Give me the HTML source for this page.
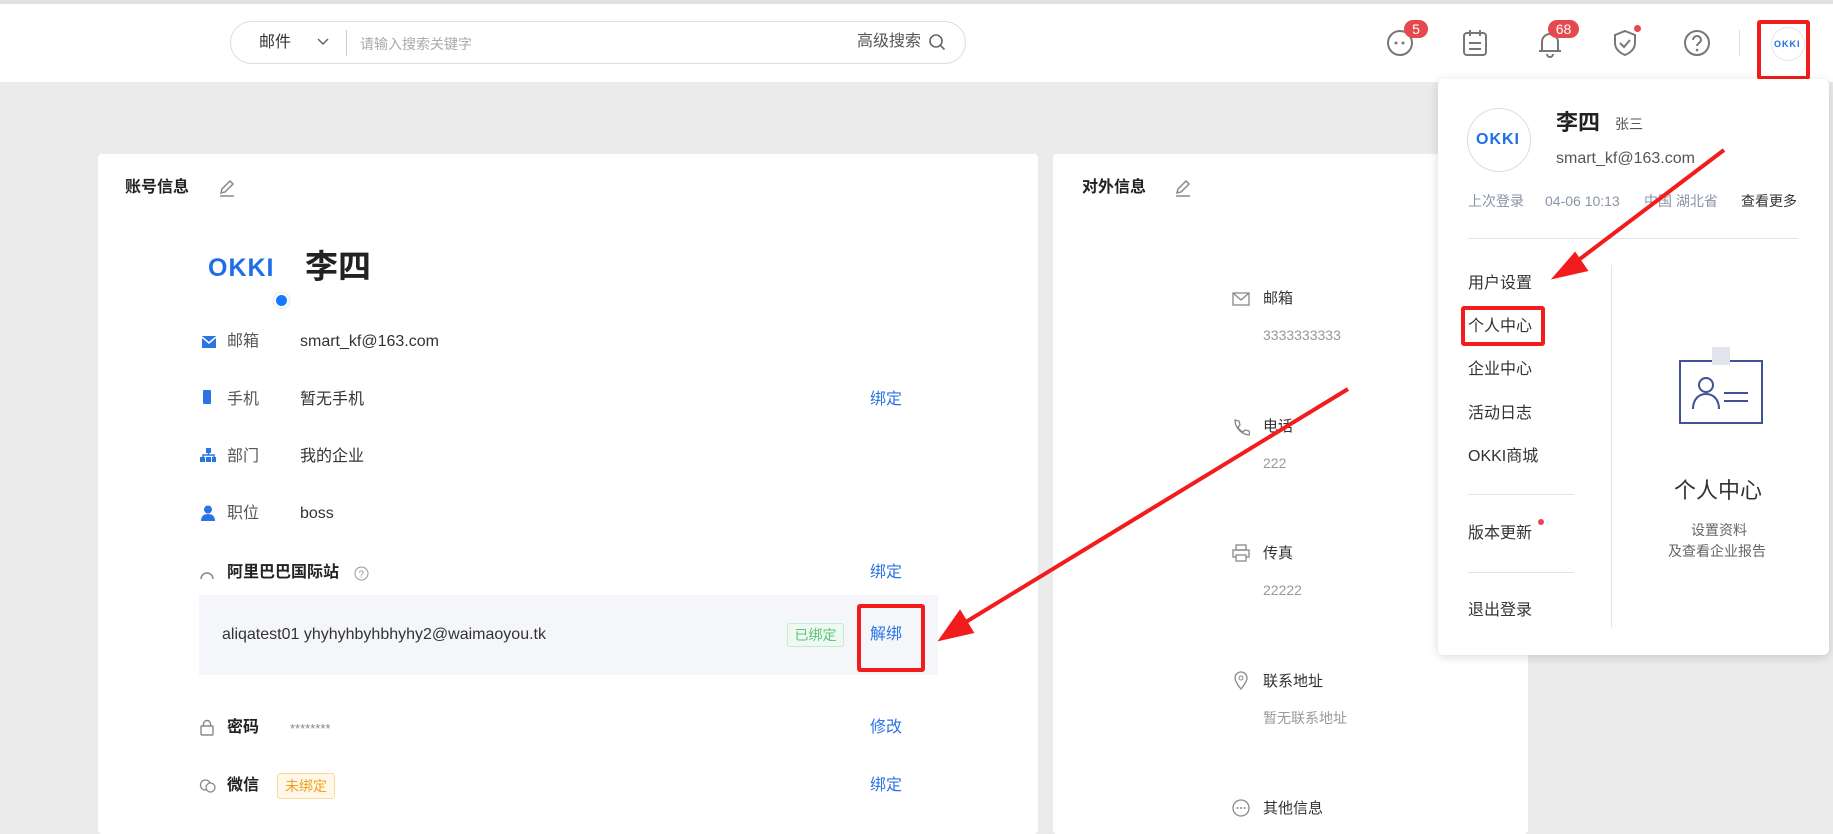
<!DOCTYPE html>
<html><head><meta charset="utf-8"><style>
*{margin:0;padding:0;box-sizing:border-box}
body{width:1833px;height:817px;overflow:hidden;background:#ebebeb;font-family:"Liberation Sans","Noto Sans CJK SC",sans-serif;color:#333;position:relative;font-size:16px;line-height:20px}
.a{position:absolute;white-space:nowrap}
.hdr{position:absolute;left:0;top:0;width:1833px;height:82px;background:#fff;border-top:4px solid #e0e0e0}
.card{position:absolute;background:#fff;border-radius:4px}
.lbl{color:#555}
.lnk{color:#2b74e4}
.g{color:#999;font-size:14px}
.okki{font-weight:bold;color:#1d6fe8;letter-spacing:1px}
.badge{position:absolute;color:#fff;background:#e5484d;border-radius:10px;font-size:14px;text-align:center;line-height:18px;height:18px}
.red{position:absolute;border:4px solid #f21c1c;border-radius:3px}
</style></head><body>
<div class="hdr"></div>
<div class="a" style="left:230px;top:21px;width:736px;height:43px;border:1px solid #ddd;border-radius:22px;background:#fff"></div>
<div class="a" style="left:259px;top:33px;font-size:16px;color:#333">邮件</div>
<svg class="a" style="left:316px;top:37px" width="14" height="10"><path d="M2 2l5 5 5-5" stroke="#666" stroke-width="1.5" fill="none"/></svg>
<div class="a" style="left:346px;top:30px;width:1px;height:26px;background:#ccc"></div>
<div class="a" style="left:360px;top:34px;font-size:14px;color:#aaa">请输入搜索关键字</div>
<div class="a" style="left:857px;top:32px;font-size:16px;color:#555">高级搜索</div>
<svg class="a" style="left:928px;top:33px" width="18" height="18"><circle cx="8" cy="8" r="6" stroke="#666" stroke-width="1.6" fill="none"/><path d="M12.5 12.5l4 4" stroke="#666" stroke-width="1.6"/></svg>

<svg class="a" style="left:1385px;top:27px" width="30" height="30"><circle cx="15" cy="16" r="12" stroke="#777" stroke-width="2" fill="none"/><circle cx="11" cy="16" r="1.5" fill="#777"/><circle cx="18" cy="16" r="1.5" fill="#777"/></svg>
<div class="badge" style="left:1404px;top:20px;width:24px">5</div>
<svg class="a" style="left:1461px;top:28px" width="28" height="30"><rect x="3" y="5" width="22" height="22" rx="3" stroke="#777" stroke-width="2" fill="none"/><path d="M9 2v6M19 2v6M8 15h12M8 21h12" stroke="#777" stroke-width="2"/></svg>
<svg class="a" style="left:1536px;top:29px" width="28" height="30"><path d="M6 22V13a8 8 0 0116 0v9H3h22" stroke="#777" stroke-width="2" fill="none"/><path d="M11 25a3 3 0 006 0" stroke="#777" stroke-width="2" fill="none"/></svg>
<div class="badge" style="left:1548px;top:20px;width:31px">68</div>
<svg class="a" style="left:1611px;top:28px" width="28" height="30"><path d="M14 3l10 4v8c0 6-5 10-10 12C9 25 4 21 4 15V7z" stroke="#777" stroke-width="2" fill="none"/><path d="M9 15l4 4 6-7" stroke="#777" stroke-width="2" fill="none"/></svg>
<div class="a" style="left:1634px;top:25px;width:7px;height:7px;border-radius:50%;background:#e5484d"></div>
<svg class="a" style="left:1682px;top:28px" width="30" height="30"><circle cx="15" cy="15" r="12" stroke="#777" stroke-width="2" fill="none"/><path d="M11 12a4 4 0 118 0c0 3-4 3-4 6" stroke="#777" stroke-width="2" fill="none"/><circle cx="15" cy="22" r="1.3" fill="#777"/></svg>
<div class="a" style="left:1739px;top:30px;width:1px;height:26px;background:#ddd"></div>
<div class="a" style="left:1771px;top:27px;width:34px;height:34px;border-radius:50%;border:1px solid #e4e4e4;background:#fff"></div>
<div class="a okki" style="left:1774px;top:34px;font-size:9px">OKKI</div>
<div class="red" style="left:1757px;top:20px;width:53px;height:60px"></div>

<div class="card" style="left:98px;top:154px;width:940px;height:680px"></div>
<div class="a" style="left:125px;top:178px;font-size:16px;font-weight:bold;color:#222">账号信息</div>
<svg class="a" style="left:217px;top:178px" width="20" height="20"><path d="M4 15l1-4 8-8 3 3-8 8z M3 18h14" stroke="#888" stroke-width="1.5" fill="none"/></svg>
<div class="a okki" style="left:208px;top:254px;font-size:25px;line-height:28px;letter-spacing:1px">OKKI</div>
<div class="a" style="left:305px;top:248px;font-size:33px;line-height:38px;font-weight:bold;color:#222">李四</div>
<div class="a" style="left:274px;top:293px;width:15px;height:15px;border-radius:50%;background:#1677ff;border:2px solid #fff;box-shadow:0 0 3px #ccc"></div>

<svg class="a" style="left:201px;top:335px" width="16" height="14"><path d="M1 1h14v12H1z" fill="#2b74e4"/><path d="M1 2l7 6 7-6" stroke="#fff" stroke-width="1.5" fill="none"/></svg>
<div class="a lbl" style="left:227px;top:332px">邮箱</div><div class="a" style="left:300px;top:332px">smart_kf@163.com</div>
<div class="a" style="left:203px;top:390px;width:8px;height:14px;background:#2b74e4;border-radius:1px"></div>
<div class="a lbl" style="left:227px;top:390px">手机</div><div class="a" style="left:300px;top:390px">暂无手机</div><div class="a lnk" style="left:870px;top:390px">绑定</div>
<svg class="a" style="left:200px;top:448px" width="16" height="15"><rect x="6" y="0" width="5" height="5" fill="#2b74e4"/><path d="M3 9V7h11v2M8.5 5v2" stroke="#2b74e4" stroke-width="1.5" fill="none"/><rect x="0" y="9" width="5" height="5" fill="#2b74e4"/><rect x="6" y="9" width="5" height="5" fill="#2b74e4"/><rect x="12" y="9" width="4" height="5" fill="#2b74e4"/></svg>
<div class="a lbl" style="left:227px;top:447px">部门</div><div class="a" style="left:300px;top:447px">我的企业</div>
<svg class="a" style="left:201px;top:505px" width="14" height="16"><circle cx="7" cy="4.5" r="4" fill="#2b74e4"/><path d="M0 16c0-5 3-7 7-7s7 2 7 7z" fill="#2b74e4"/></svg>
<div class="a lbl" style="left:227px;top:504px">职位</div><div class="a" style="left:300px;top:504px">boss</div>

<svg class="a" style="left:199px;top:567px" width="16" height="14"><path d="M2 12a6 6 0 0112 0" stroke="#888" stroke-width="1.5" fill="none"/></svg>
<div class="a" style="left:227px;top:563px;font-weight:bold;color:#222">阿里巴巴国际站</div>
<svg class="a" style="left:354px;top:566px" width="15" height="15"><circle cx="7.5" cy="7.5" r="6.5" stroke="#999" fill="none"/><text x="4.5" y="11.5" font-size="10" fill="#999" font-family="Liberation Sans">?</text></svg>
<div class="a lnk" style="left:870px;top:563px">绑定</div>
<div class="a" style="left:199px;top:595px;width:739px;height:80px;background:#f4f6fa"></div>
<div class="a" style="left:222px;top:625px;font-size:16px">aliqatest01 yhyhyhbyhbhyhy2@waimaoyou.tk</div>
<div class="a" style="left:787px;top:623px;width:57px;height:24px;border:1px solid #c5ebd0;background:#eefaf1;color:#5cc37a;font-size:14px;text-align:center;line-height:22px;border-radius:3px">已绑定</div>
<div class="a lnk" style="left:870px;top:625px">解绑</div>
<div class="red" style="left:857px;top:604px;width:68px;height:68px"></div>

<svg class="a" style="left:200px;top:719px" width="14" height="17"><rect x="1" y="7" width="12" height="9" rx="1" stroke="#888" stroke-width="1.4" fill="none"/><path d="M3.5 7V5a3.5 3.5 0 017 0v2" stroke="#888" stroke-width="1.4" fill="none"/></svg>
<div class="a" style="left:227px;top:718px;font-weight:bold;color:#222">密码</div>
<div class="a" style="left:290px;top:719px;color:#888;font-size:13px">********</div>
<div class="a lnk" style="left:870px;top:718px">修改</div>
<svg class="a" style="left:199px;top:778px" width="18" height="16"><circle cx="6.5" cy="7" r="5" stroke="#888" stroke-width="1.3" fill="none"/><circle cx="11.5" cy="9.5" r="4.5" stroke="#888" stroke-width="1.3" fill="#fff"/></svg>
<div class="a" style="left:227px;top:776px;font-weight:bold;color:#222">微信</div>
<div class="a" style="left:277px;top:773px;width:58px;height:26px;border:1px solid #f8d9a0;background:#fff8e8;color:#f0a020;font-size:14px;text-align:center;line-height:24px;border-radius:3px">未绑定</div>
<div class="a lnk" style="left:870px;top:776px">绑定</div>

<div class="card" style="left:1053px;top:154px;width:475px;height:680px"></div>
<div class="a" style="left:1082px;top:178px;font-weight:bold;color:#222">对外信息</div>
<svg class="a" style="left:1173px;top:178px" width="20" height="20"><path d="M4 15l1-4 8-8 3 3-8 8z M3 18h14" stroke="#888" stroke-width="1.5" fill="none"/></svg>
<svg class="a" style="left:1232px;top:292px" width="18" height="14"><rect x="1" y="1" width="16" height="12" stroke="#888" stroke-width="1.3" fill="none"/><path d="M1 1l8 7 8-7" stroke="#888" stroke-width="1.3" fill="none"/></svg>
<div class="a" style="left:1263px;top:289px;font-size:15px">邮箱</div><div class="a g" style="left:1263px;top:325px">3333333333</div>
<svg class="a" style="left:1232px;top:418px" width="18" height="18"><path d="M3 2l4 1 1 4-2 2c1 2 3 4 5 5l2-2 4 1 1 4c-8 0-15-7-15-15z" stroke="#888" stroke-width="1.3" fill="none"/></svg>
<div class="a" style="left:1263px;top:417px;font-size:15px">电话</div><div class="a g" style="left:1263px;top:453px">222</div>
<svg class="a" style="left:1232px;top:544px" width="18" height="18"><rect x="4" y="1" width="10" height="5" stroke="#888" stroke-width="1.3" fill="none"/><rect x="1" y="6" width="16" height="7" stroke="#888" stroke-width="1.3" fill="none"/><rect x="4" y="11" width="10" height="6" stroke="#888" stroke-width="1.3" fill="#fff"/></svg>
<div class="a" style="left:1263px;top:544px;font-size:15px">传真</div><div class="a g" style="left:1263px;top:580px">22222</div>
<svg class="a" style="left:1233px;top:670px" width="16" height="20"><path d="M8 19s-6-7-6-11a6 6 0 0112 0c0 4-6 11-6 11z" stroke="#888" stroke-width="1.3" fill="none"/><circle cx="8" cy="8" r="2" stroke="#888" fill="none"/></svg>
<div class="a" style="left:1263px;top:672px;font-size:15px">联系地址</div><div class="a g" style="left:1263px;top:708px">暂无联系地址</div>
<svg class="a" style="left:1232px;top:799px" width="18" height="18"><circle cx="9" cy="9" r="8" stroke="#888" stroke-width="1.3" fill="none"/><circle cx="5.5" cy="9" r="1" fill="#888"/><circle cx="9" cy="9" r="1" fill="#888"/><circle cx="12.5" cy="9" r="1" fill="#888"/></svg>
<div class="a" style="left:1263px;top:799px;font-size:15px">其他信息</div>

<div class="a" style="left:1438px;top:79px;width:391px;height:576px;background:#fff;border-radius:6px;box-shadow:0 2px 10px rgba(0,0,0,.15)"></div>
<div class="a" style="left:1467px;top:108px;width:64px;height:64px;border-radius:50%;border:1px solid #ddd"></div>
<div class="a okki" style="left:1476px;top:130px;font-size:16px">OKKI</div>
<div class="a" style="left:1556px;top:110px;font-size:22px;line-height:26px;font-weight:bold;color:#222">李四</div>
<div class="a" style="left:1615px;top:114px;font-size:14px;color:#555">张三</div>
<div class="a" style="left:1556px;top:149px;font-size:16px;color:#555">smart_kf@163.com</div>
<div class="a" style="left:1468px;top:191px;font-size:14px;color:#8a94a6">上次登录</div>
<div class="a" style="left:1545px;top:191px;font-size:14px;color:#8a94a6">04-06 10:13</div>
<div class="a" style="left:1644px;top:191px;font-size:14px;color:#8a94a6">中国 湖北省</div>
<div class="a" style="left:1741px;top:191px;font-size:14px;color:#333">查看更多</div>
<div class="a" style="left:1468px;top:238px;width:330px;height:1px;background:#e3e3e3"></div>
<div class="a" style="left:1468px;top:274px;font-size:16px">用户设置</div>
<div class="a" style="left:1468px;top:317px;font-size:16px">个人中心</div>
<div class="a" style="left:1468px;top:360px;font-size:16px">企业中心</div>
<div class="a" style="left:1468px;top:404px;font-size:16px">活动日志</div>
<div class="a" style="left:1468px;top:447px;font-size:16px">OKKI商城</div>
<div class="a" style="left:1468px;top:494px;width:106px;height:1px;background:#e3e3e3"></div>
<div class="a" style="left:1468px;top:524px;font-size:16px">版本更新</div>
<div class="a" style="left:1538px;top:519px;width:6px;height:6px;border-radius:50%;background:#e5484d"></div>
<div class="a" style="left:1468px;top:572px;width:106px;height:1px;background:#e3e3e3"></div>
<div class="a" style="left:1468px;top:601px;font-size:16px">退出登录</div>
<div class="a" style="left:1611px;top:265px;width:1px;height:363px;background:#e6e6e6"></div>
<div class="red" style="left:1461px;top:306px;width:84px;height:40px"></div>
<svg class="a" style="left:1678px;top:345px" width="86" height="82"><rect x="2" y="16" width="82" height="62" stroke="#3f5294" stroke-width="2" fill="none"/><rect x="34" y="2" width="18" height="18" fill="#e2e4ec"/><circle cx="28" cy="40" r="7" stroke="#3f5294" stroke-width="2" fill="none"/><path d="M15 64c0-10 6-15 13-15s13 5 13 15" stroke="#3f5294" stroke-width="2" fill="none"/><path d="M46 48h24M46 56h24" stroke="#3f5294" stroke-width="2"/></svg>
<div class="a" style="left:1674px;top:478px;font-size:22px;line-height:26px;color:#333">个人中心</div>
<div class="a" style="left:1691px;top:520px;font-size:14px;color:#666">设置资料</div>
<div class="a" style="left:1668px;top:541px;font-size:14px;color:#666">及查看企业报告</div>

<svg class="a" style="left:0;top:0" width="1833" height="817">
<path d="M1724 150L1568 268" stroke="#f21c1c" stroke-width="4"/>
<path d="M1555 277L1575 254L1586 270z" fill="#f21c1c" stroke="#f21c1c" stroke-width="3"/>
<path d="M1348 389L956 628" stroke="#f21c1c" stroke-width="4"/>
<path d="M941 639L960 612L972 632z" fill="#f21c1c" stroke="#f21c1c" stroke-width="3"/>
</svg>
</body></html>
